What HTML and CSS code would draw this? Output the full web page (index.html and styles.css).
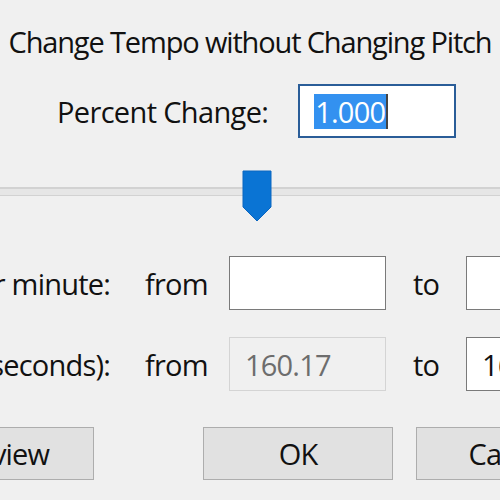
FILE: index.html
```html
<!DOCTYPE html>
<html lang="en">
<head>
    <meta charset="UTF-8">
    <meta name="viewport" content="width=device-width, initial-scale=1.0">
    <title>Change Tempo</title>
    <link rel="stylesheet" href="styles.css">
</head>
<body>

    <div class="dialog">
        <h1 class="title">Change Tempo without Changing Pitch</h1>

        <!-- Pourcentage -->
        <div class="percent-row">
            <label class="percent-label" for="percent">Percent Change:</label>
            <div class="field field-focus" id="percent"><span class="selected">1.000</span><span class="caret"></span></div>
        </div>

        <!-- Curseur -->
        <div class="slider">
            <svg class="thumb" width="30" height="52" viewBox="0 0 30 52">
                <path d="M1 1 H29 V37 L15 51 L1 37 Z" fill="#0a74d4" stroke="#0b66c0" stroke-width="1"/>
            </svg>
        </div>

        <!-- Tempo et durée -->
        <div class="form-grid">
            <div class="row-label"><span>Beats per minute:</span></div>
            <span class="word">from</span>
            <div class="field"></div>
            <span class="word word-to">to</span>
            <div class="field"></div>

            <div class="row-label"><span>Length (seconds):</span></div>
            <span class="word">from</span>
            <div class="field field-disabled">160.17</div>
            <span class="word word-to">to</span>
            <div class="field">160.17</div>
        </div>

        <!-- Boutons -->
        <div class="buttons">
            <button class="btn btn-preview">Preview</button>
            <button class="btn btn-ok">OK</button>
            <button class="btn">Cancel</button>
        </div>
    </div>

</body>
</html>
```

FILE: styles.css
```css
html, body {
    margin: 0;
    background-color: #f0f0f0;
    overflow: hidden;
}

body {
    font-family: "Open Sans", "Noto Sans", sans-serif;
    font-size: 29px;
    letter-spacing: -0.8px;
    color: #111;
    width: 500px;
    height: 500px;
}

.dialog {
    padding-top: 21px;
}

.title {
    margin: 0;
    font-size: 29px;
    font-weight: normal;
    text-align: center;
    white-space: nowrap;
    line-height: 41px;
    letter-spacing: -1.15px;
}

.percent-row {
    display: flex;
    align-items: center;
    margin-top: 22px;
    padding-left: 57px;
    gap: 30px;
}

.percent-label {
    letter-spacing: -0.65px;
}

.field {
    box-sizing: border-box;
    width: 157px;
    height: 54px;
    border: 1px solid #7a7a7a;
    background-color: #fff;
    display: flex;
    align-items: center;
    padding-left: 15px;
    white-space: nowrap;
    overflow: hidden;
}

.field-focus {
    width: 158px;
    border: 2px solid #2a5d98;
    padding-left: 14px;
}

.selected {
    background-color: #3391f0;
    color: #fff;
    line-height: 35px;
    padding: 0 1px;
}

.caret {
    width: 2px;
    height: 35px;
    background-color: #444;
}

.slider {
    margin-top: 32px;
    height: 52px;
    background:
        linear-gradient(#d2d2d2, #d2d2d2) 0 17px / 100% 2px no-repeat,
        linear-gradient(#e6e6e6, #e6e6e6) 0 19px / 100% 6px no-repeat,
        linear-gradient(#d2d2d2, #d2d2d2) 0 24px / 100% 2px no-repeat;
}

.thumb {
    display: block;
    margin-left: 242px;
}

.form-grid {
    display: grid;
    grid-template-columns: 145px 84px 157px 80px 157px;
    row-gap: 27px;
    align-items: center;
    margin-top: 34px;
}

.row-label {
    display: flex;
    justify-content: flex-end;
    white-space: nowrap;
    padding-right: 35px;
}

.word-to {
    padding-left: 27px;
}

.field-disabled {
    background-color: #f0f0f0;
    border-color: #d4d4d4;
    color: #6d6d6d;
}

.buttons {
    display: flex;
    margin-top: 36px;
    margin-left: -96px;
    gap: 23px;
}

.btn {
    flex: none;
    width: 190px;
    height: 53px;
    font-family: inherit;
    font-size: 29px;
    letter-spacing: -0.8px;
    color: #111;
    background-color: #e1e1e1;
    border: 1px solid #adadad;
    padding: 0;
}

.btn-preview {
    margin-right: 86px;
}
```
